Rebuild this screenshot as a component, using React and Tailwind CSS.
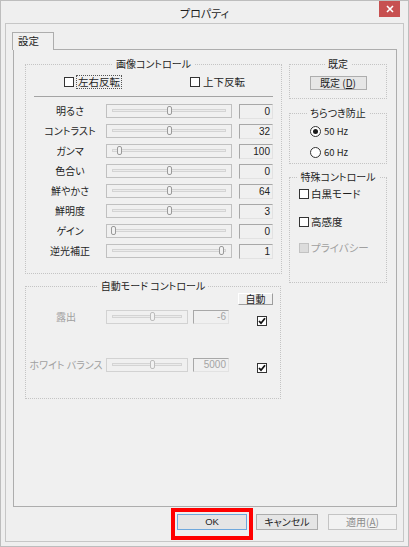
import React from 'react';

const FONT = "font-['Noto_Sans_CJK_JP','Liberation_Sans',sans-serif] [font-feature-settings:'palt']";

const ROWS = [
  { label: '明るさ', pos: 60, value: '0' },
  { label: 'コントラスト', pos: 60, value: '32' },
  { label: 'ガンマ', pos: 10, value: '100' },
  { label: '色合い', pos: 60, value: '0' },
  { label: '鮮やかさ', pos: 60, value: '64' },
  { label: '鮮明度', pos: 60, value: '3' },
  { label: 'ゲイン', pos: 4, value: '0' },
  { label: '逆光補正', pos: 112, value: '1' },
];

function Group({ title, className, children }) {
  return (
    <fieldset className={`border border-dotted border-[#c4c4c4] ${className}`}>
      <legend className="mx-auto px-[3px] h-[14px] text-[10px] leading-[14px]">{title}</legend>
      {children}
    </fieldset>
  );
}

function Check({ checked, disabled }) {
  return (
    <span
      className={`w-[10px] h-[10px] shrink-0 border flex items-center justify-center ${
        disabled ? 'border-[#c2c2c2] bg-[#dcdcdc]' : 'border-[#333] bg-white'
      }`}
    >
      {checked && (
        <svg width="8" height="8" viewBox="0 0 8 8">
          <path d="M1 4 L3 6.2 L7 1.2" fill="none" stroke="#111" strokeWidth="1.8" />
        </svg>
      )}
    </span>
  );
}

function Radio({ on }) {
  return (
    <span className="w-[11px] h-[11px] rounded-full border border-[#333] bg-white flex items-center justify-center">
      {on && <span className="w-[5px] h-[5px] rounded-full bg-[#1a1a1a]" />}
    </span>
  );
}

function Slider({ className, pos, disabled }) {
  return (
    <div className={`relative h-[14px] border ${disabled ? 'border-[#d2d2d2]' : 'border-[#c0c0c0]'} ${className}`}>
      <div className="absolute left-[5px] right-[5px] top-[4px] h-[3px] border border-[#d4d4d4] bg-[#ebebeb]" />
      <div
        className={`absolute top-[1px] w-[5px] h-[9px] rounded-[2px] border bg-[#f2f2f2] ${
          disabled ? 'border-[#bdbdbd]' : 'border-[#9a9a9a]'
        }`}
        style={{ left: pos }}
      />
    </div>
  );
}

function Field({ className, value, disabled }) {
  return (
    <div
      className={`border border-t-[#a8a8a8] border-l-[#a8a8a8] border-b-[#e2e2e2] border-r-[#e2e2e2] text-right pr-[2px] font-['Liberation_Sans',sans-serif] text-[10px] ${
        disabled ? 'text-[#a4a4a4]' : 'text-[#222]'
      } ${className}`}
    >
      {value}
    </div>
  );
}

export default function App() {
  return (
    <div className={`w-[409px] h-[547px] bg-[#efefef] border border-[#bdbdbd] flex flex-col text-[#1e1e1e] ${FONT}`}>
      {/* title bar */}
      <div className="relative h-[22px] flex items-center justify-center text-[11px] pt-[2px]">
        プロパティ
        <div className="absolute right-[8px] top-0 w-[21px] h-[16px] bg-[#c75050] flex items-center justify-center">
          <svg width="8" height="8" viewBox="0 0 8 8">
            <path d="M1 1 L7 7 M7 1 L1 7" stroke="#fff" strokeWidth="1.6" />
          </svg>
        </div>
      </div>

      {/* client area */}
      <div className="mx-[4px] h-[519px] border border-[#c6c6c6] flex flex-col">
        <div className="relative z-10 mt-[8px] ml-[6px] w-[42px] h-[18px] border border-b-0 border-[#adadad] bg-[#f0f0f0] text-[10.5px] leading-[16px] pl-[5px]">
          設定
        </div>

        <div className="ml-[7px] -mt-px w-[384px] h-[458px] border border-[#adadad] bg-[#f0f0f0] flex gap-[7px] pl-[11px] pt-[7px]">
          {/* left column */}
          <div className="w-[257px] flex flex-col gap-[5px]">
            <Group title="画像コントロール" className="w-[257px] h-[217px]">
              <div className="mt-[4px] h-[14px] flex items-center ml-[38px] text-[10.5px]">
                <div className="w-[126px] flex items-center">
                  <Check />
                  <span className="ml-[2px] border border-dotted border-[#555] px-[1px] leading-[12px]">左右反転</span>
                </div>
                <div className="flex items-center">
                  <Check />
                  <span className="ml-[3px] leading-[12px]">上下反転</span>
                </div>
              </div>
              <div className="mt-[7px] mx-[8px] h-px bg-[#a4a4a4]" />
              <div className="mt-[4px] flex flex-col">
                {ROWS.map(r => (
                  <div key={r.label} className="h-[20px] flex items-center">
                    <div className="ml-[8px] w-[72px] text-center text-[10px] leading-[14px]">{r.label}</div>
                    <Slider className="w-[126px]" pos={r.pos} />
                    <Field className="ml-[7px] w-[34px] h-[15px] leading-[13px]" value={r.value} />
                  </div>
                ))}
              </div>
            </Group>

            <Group title="自動モード コントロール" className="w-[256px] h-[120px]">
              <div className="flex justify-end pr-[7px]">
                <div className="w-[35px] h-[12px] border border-t-white border-l-white border-b-[#9d9d9d] border-r-[#9d9d9d] text-[10px] leading-[10px] text-center">
                  自動
                </div>
              </div>
              <div className="mt-[5px] flex items-start">
                <div className="w-[80px] h-[14px] text-center text-[10px] leading-[14px] text-[#a0a0a0]">露出</div>
                <Slider className="w-[82px]" pos={43} disabled />
                <Field className="ml-[5px] w-[36px] h-[14px] leading-[12px]" value="-6" disabled />
                <div className="ml-[28px] mt-[6px]">
                  <Check checked />
                </div>
              </div>
              <div className="mt-[32px] flex items-start">
                <div className="w-[80px] h-[14px] text-center text-[10px] leading-[14px] text-[#a0a0a0]">ホワイト バランス</div>
                <Slider className="w-[82px]" pos={43} disabled />
                <Field className="ml-[5px] w-[36px] h-[14px] leading-[12px]" value="5000" disabled />
                <div className="ml-[28px] mt-[5px]">
                  <Check checked />
                </div>
              </div>
            </Group>
          </div>

          {/* right column */}
          <div className="w-[98px] flex flex-col">
            <Group title="既定" className="w-[98px] h-[42px]">
              <div className="mt-[5px] mx-auto w-[57px] h-[14px] border border-[#adadad] bg-[#e6e6e6] text-[10px] leading-[12px] text-center">
                既定 (<span className="underline">D</span>)
              </div>
            </Group>

            <Group title="ちらつき防止" className="mt-[7px] w-[98px] h-[58px]">
              <div className="mt-[4px] ml-[20px] h-[14px] flex items-center">
                <Radio on />
                <span className="ml-[3px] text-[9.5px]">50 Hz</span>
              </div>
              <div className="mt-[7px] ml-[20px] h-[14px] flex items-center">
                <Radio />
                <span className="ml-[3px] text-[9.5px]">60 Hz</span>
              </div>
            </Group>

            <Group title="特殊コントロール" className="mt-[6px] w-[98px] h-[113px]">
              <div className="mt-[3px] ml-[9px] h-[14px] flex items-center text-[10.5px]">
                <Check />
                <span className="ml-[2px]">白黒モード</span>
              </div>
              <div className="mt-[14px] ml-[9px] h-[14px] flex items-center text-[10.5px]">
                <Check />
                <span className="ml-[2px]">高感度</span>
              </div>
              <div className="mt-[12px] ml-[9px] h-[14px] flex items-center text-[10.5px] text-[#a0a0a0]">
                <Check disabled />
                <span className="ml-[2px]">プライバシー</span>
              </div>
            </Group>
          </div>
        </div>

        {/* buttons */}
        <div className="mt-[7px] flex justify-end pr-[6px] text-[10px]">
          <div className="relative">
            <div className="w-[70px] h-[16px] border border-[#6fa8dc] bg-[#e5e5e5] text-center leading-[14px] font-['Liberation_Sans',sans-serif] text-[9.5px]">
              OK
            </div>
            <span className="absolute -left-[6px] -top-[6px] w-[82px] h-[32px] border-4 border-[#ff0000]" />
          </div>
          <div className="ml-[9px] w-[62px] h-[16px] border border-[#acacac] bg-[#e5e5e5] text-center leading-[14px]">
            キャンセル
          </div>
          <div className="ml-[10px] w-[69px] h-[16px] border border-[#c4c4c4] bg-[#f2f2f2] text-center leading-[14px] text-[#8c8c8c]">
            適用(<span className="underline">A</span>)
          </div>
        </div>
      </div>
    </div>
  );
}
